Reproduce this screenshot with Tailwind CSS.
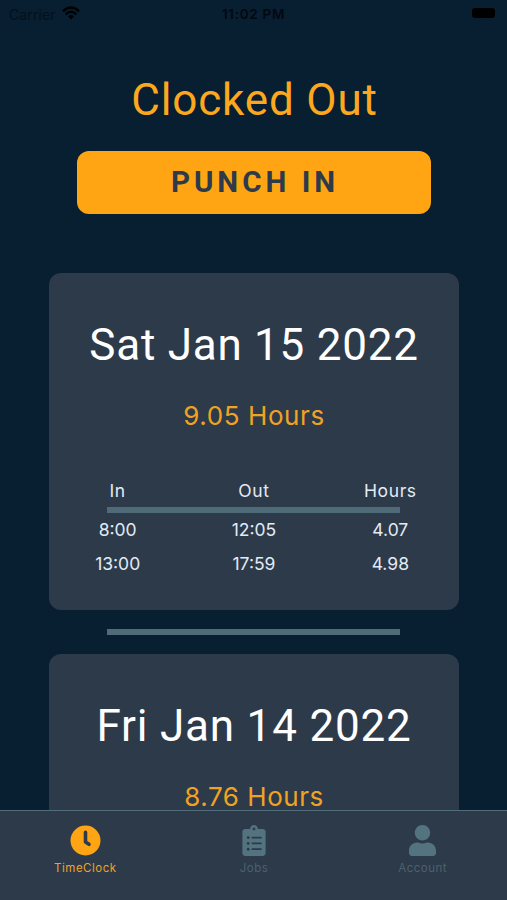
<!DOCTYPE html>
<html lang="en">
<head>
<meta charset="utf-8">
<title>TimeClock</title>
<script src="https://cdn.jsdelivr.net/npm/@tailwindcss/browser@4"></script>
</head>
<body class="bg-[#081e31]">
<div class="flex h-[900px] w-[507px] flex-col overflow-hidden bg-[#081e31] font-['Roboto',sans-serif]">
  <header class="grid h-[28px] shrink-0 grid-cols-3 items-center pl-[9px] pr-[12px] font-['Inter',sans-serif] text-[14px] text-[#020810]">
    <div class="flex items-center gap-[6px]">
      <span class="tracking-[0.1px] text-[#04101b]">Carrier</span>
      <svg class="mb-[2px] h-[14px] w-[18px]" viewBox="0 0 18 14" fill="none" stroke="#000" stroke-width="2.5"><path d="M1 5.3Q9-2.200 17 5.300"/><path d="M3.700 8.300Q9 3.300 14.300 8.300"/><path d="M6 10.300Q9 7.700 12 10.300L9 13.500Z" fill="#000" stroke="none"/></svg>
    </div>
    <span class="pl-[3px] text-center text-[13.500px] font-semibold tracking-[0.7px] whitespace-nowrap">11:02 PM</span>
    <span class="mb-[2px] h-[10px] w-[23px] justify-self-end rounded-[3px] bg-black"></span>
  </header>

  <main class="flex min-h-0 flex-1 flex-col items-center overflow-hidden">
    <h1 class="mt-[46px] h-[52px] pl-[2px] text-[44px] leading-[52px] tracking-[0.850px] whitespace-nowrap text-[#fba81f]">Clocked Out</h1>
    <button class="mt-[25px] h-[63px] w-[354px] shrink-0 rounded-[12px] bg-[#ffa514] pl-[3px] text-[29.500px] font-bold tracking-[4px] text-[#2d3a4a]">PUNCH IN</button>

    <section class="mt-[59px] flex h-[337px] w-[410px] shrink-0 flex-col items-center rounded-[12px] bg-[#2d3a4a]">
      <h2 class="mt-[46px] h-[52px] pl-px text-[44px] leading-[52px] tracking-[0.750px] whitespace-nowrap text-white">Sat Jan 15 2022</h2>
      <p class="mt-[29px] h-[32px] pl-px font-['Inter',sans-serif] text-[26px] leading-[32px] tracking-[0.600px] whitespace-nowrap text-[#f0a323]">9.05 Hours</p>
      <div class="mt-[47px] grid h-[24px] w-full grid-cols-3 pl-px text-center font-['Inter',sans-serif] text-[17.500px] leading-[24px] tracking-[0.600px] text-[#e3ebf5]">
        <span>In</span><span>Out</span><span>Hours</span>
      </div>
      <div class="mt-[4px] h-[6px] w-[293px] bg-[#4f6b78]"></div>
      <div class="grid w-full grid-cols-3 pl-px text-center font-['Inter',sans-serif] text-[17.500px] leading-[34px] text-[#e3ebf5]">
        <span>8:00</span><span>12:05</span><span>4.07</span>
        <span>13:00</span><span>17:59</span><span>4.98</span>
      </div>
    </section>

    <div class="my-[19px] h-[6px] w-[293px] shrink-0 bg-[#4f6b78]"></div>

    <section class="flex h-[337px] w-[410px] shrink-0 flex-col items-center rounded-[12px] bg-[#2d3a4a]">
      <h2 class="mt-[46px] h-[52px] pl-px text-[44px] leading-[52px] tracking-[0.800px] whitespace-nowrap text-white">Fri Jan 14 2022</h2>
      <p class="mt-[29px] h-[32px] pl-px font-['Inter',sans-serif] text-[26px] leading-[32px] tracking-[0.550px] whitespace-nowrap text-[#f0a323]">8.76 Hours</p>
    </section>
  </main>

  <nav class="grid h-[90px] shrink-0 grid-cols-3 border-t border-[#536c79] bg-[#2d3a4a] pl-px font-['Inter',sans-serif] text-[11.500px] leading-[16px] tracking-[0.500px]">
    <a class="flex flex-col items-center pt-[14px] text-[#eda224]">
      <svg class="h-[31px] w-[31px]" viewBox="0 0 31 31"><circle cx="15.500" cy="15.500" r="15" fill="#ffa514"/><path d="M15.500 7.200v9.700l3.500 2.400" fill="none" stroke="#2d3a4a" stroke-width="3.600" stroke-linecap="round" stroke-linejoin="round"/></svg>
      <span class="mt-[4px]">TimeClock</span>
    </a>
    <a class="flex flex-col items-center pt-[14px] text-[#4b6170]">
      <svg class="h-[31px] w-[24px]" viewBox="0 0 384 512"><path fill="#547381" d="M336 64h-80c0-35.300-28.700-64-64-64s-64 28.700-64 64H48C21.500 64 0 85.500 0 112v352c0 26.500 21.500 48 48 48h288c26.500 0 48-21.500 48-48V112c0-26.500-21.500-48-48-48zM192 40c13.300 0 24 10.700 24 24s-10.700 24-24 24-24-10.700-24-24 10.700-24 24-24z"/><g fill="#2d3a4a"><circle cx="96" cy="208" r="24"/><circle cx="96" cy="304" r="24"/><circle cx="96" cy="400" r="24"/><rect x="152" y="194" width="168" height="28" rx="8"/><rect x="152" y="290" width="168" height="28" rx="8"/><rect x="152" y="386" width="168" height="28" rx="8"/></g></svg>
      <span class="mt-[4px]">Jobs</span>
    </a>
    <a class="flex flex-col items-center pt-[14px] text-[#4b6170]">
      <svg class="h-[31px] w-[27px]" viewBox="0 0 448 512"><path fill="#547381" d="M224 256c70.700 0 128-57.300 128-128S294.700 0 224 0 96 57.300 96 128s57.300 128 128 128zm89.600 32h-16.700c-22.200 10.200-46.900 16-72.900 16s-50.600-5.800-72.900-16h-16.700C60.200 288 0 348.200 0 422.400V464c0 26.500 21.500 48 48 48h352c26.500 0 48-21.500 48-48v-41.600c0-74.200-60.200-134.400-134.400-134.400z"/></svg>
      <span class="mt-[4px]">Account</span>
    </a>
  </nav>
</div>
</body>
</html>
